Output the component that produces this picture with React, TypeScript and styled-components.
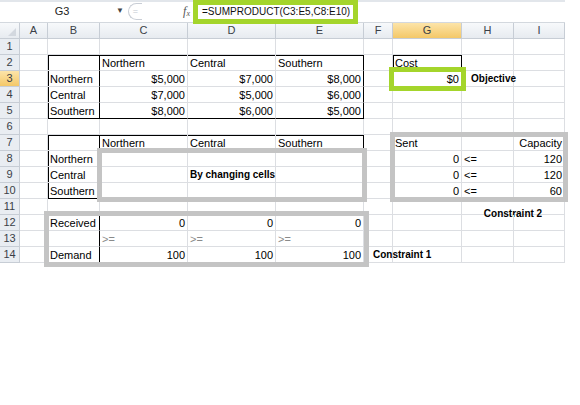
import React from 'react';
import styled, { createGlobalStyle, css } from 'styled-components';

const GlobalStyle = createGlobalStyle`
  html, body {
    margin: 0;
    padding: 0;
    background: #fff;
  }
  body {
    font-family: "Liberation Sans", Arial, sans-serif;
    color: #000;
  }
`;

const COLS = '20px 28px 52px 88px 88px 88px 29px 69px 52px 51px';
const GREEN = '#a4d52b';
const FRAME = '#c4c4c4';
const GRID_LINE = '#dcdee2';

type CellDef = {
  t?: string;
  a?: 'left' | 'right' | 'center';
  bold?: boolean;
  muted?: boolean;
  indent?: boolean;
  drop?: boolean;
  e?: string;
  span?: number;
};
type RowDef = Partial<Record<string, CellDef>>;

const LETTERS = ['A', 'B', 'C', 'D', 'E', 'F', 'G', 'H', 'I'];

const ROWS: RowDef[] = [
  {},
  {
    B: { e: 'tlr' },
    C: { t: 'Northern', e: 't' },
    D: { t: 'Central', e: 't' },
    E: { t: 'Southern', e: 'tr' },
    G: { t: 'Cost', e: 'tlr' },
  },
  {
    B: { t: 'Northern', e: 'lr' },
    C: { t: '$5,000', a: 'right' },
    D: { t: '$7,000', a: 'right' },
    E: { t: '$8,000', a: 'right', e: 'r' },
    G: { t: '$0', a: 'right', e: 'lr' },
    H: { t: 'Objective', bold: true, indent: true },
  },
  {
    B: { t: 'Central', e: 'lr' },
    C: { t: '$7,000', a: 'right' },
    D: { t: '$5,000', a: 'right' },
    E: { t: '$6,000', a: 'right', e: 'r' },
  },
  {
    B: { t: 'Southern', e: 'lrb' },
    C: { t: '$8,000', a: 'right', e: 'b' },
    D: { t: '$6,000', a: 'right', e: 'b' },
    E: { t: '$5,000', a: 'right', e: 'rb' },
  },
  {},
  {
    B: { e: 'tlr' },
    C: { t: 'Northern', e: 't' },
    D: { t: 'Central', e: 't' },
    E: { t: 'Southern', e: 'tr' },
    G: { t: 'Sent' },
    I: { t: 'Capacity', a: 'right' },
  },
  {
    B: { t: 'Northern', e: 'lr' },
    E: { e: 'r' },
    G: { t: '0', a: 'right' },
    H: { t: '<=' },
    I: { t: '120', a: 'right' },
  },
  {
    B: { t: 'Central', e: 'lr' },
    D: { t: 'By changing cells', bold: true },
    E: { e: 'r' },
    G: { t: '0', a: 'right' },
    H: { t: '<=' },
    I: { t: '120', a: 'right' },
  },
  {
    B: { t: 'Southern', e: 'lrb' },
    C: { e: 'b' },
    D: { e: 'b' },
    E: { e: 'rb' },
    G: { t: '0', a: 'right' },
    H: { t: '<=' },
    I: { t: '60', a: 'right' },
  },
  {
    H: { t: 'Constraint 2', bold: true, a: 'center', span: 2, drop: true },
  },
  {
    B: { t: 'Received', e: 'r' },
    C: { t: '0', a: 'right' },
    D: { t: '0', a: 'right' },
    E: { t: '0', a: 'right' },
  },
  {
    B: { e: 'r' },
    C: { t: '>=', muted: true },
    D: { t: '>=', muted: true },
    E: { t: '>=', muted: true },
  },
  {
    B: { t: 'Demand', e: 'r' },
    C: { t: '100', a: 'right' },
    D: { t: '100', a: 'right' },
    E: { t: '100', a: 'right' },
    F: { t: 'Constraint 1', bold: true, indent: true },
  },
];

const Window = styled.div`
  width: 580px;
  height: 405px;
  overflow: hidden;
  background: #fff;
`;

const FormulaBar = styled.div`
  display: flex;
  align-items: flex-start;
  width: 565px;
  height: 23px;
  box-sizing: border-box;
  border-bottom: 1px solid #d3d8de;
  box-shadow: inset 0 2px 0 #e2e6eb;
`;

const NameBox = styled.div`
  display: flex;
  align-items: center;
  justify-content: center;
  width: 112px;
  height: 22px;
  padding-left: 12px;
  box-sizing: border-box;
  font-size: 11px;
  color: #222;
`;

const DropArrow = styled.div`
  width: 16px;
  height: 22px;
  line-height: 22px;
  text-align: center;
  font-size: 8px;
  color: #444;
`;

const Pill = styled.div`
  width: 13px;
  height: 15px;
  margin-top: 3px;
  border: 1px solid #c9ced6;
  border-right: none;
  border-radius: 9px 0 0 9px;
  font-size: 9px;
  line-height: 14px;
  text-align: center;
  color: #c2c8d0;
`;

const FxSlot = styled.div`
  width: 51px;
  height: 22px;
  padding-right: 3px;
  box-sizing: border-box;
  text-align: right;
  font-family: "Liberation Serif", serif;
  font-style: italic;
  font-size: 12px;
  line-height: 22px;
  color: #555;

  sub {
    font-size: 8px;
    vertical-align: -1px;
  }
`;

const FormulaField = styled.div`
  position: relative;
  z-index: 2;
  width: 165px;
  height: 24px;
  box-sizing: border-box;
  border: 5px solid ${GREEN};
  background: #fff;
  padding-left: 4px;
  font-size: 10px;
  line-height: 14px;
  white-space: nowrap;
  color: #111;
`;

const FormulaRest = styled.div`
  flex: 1;
`;

const Sheet = styled.div`
  position: relative;
  width: 565px;
`;

const Grid = styled.div`
  display: grid;
  grid-template-columns: ${COLS};
  grid-auto-rows: 16px;
`;

const OverlayLayer = styled(Grid)`
  position: absolute;
  inset: 0;
  pointer-events: none;
`;

const Frame = styled.div<{ $c: string; $r: string; $m: string; $color: string }>`
  grid-column: ${p => p.$c};
  grid-row: ${p => p.$r};
  margin: ${p => p.$m};
  border: 5px solid ${p => p.$color};
`;

const headBase = css<{ $active?: boolean }>`
  box-sizing: border-box;
  font-size: 11px;
  line-height: 15px;
  text-align: center;
  color: #3a3f47;
  border-right: 1px solid #c7cdd5;
  border-bottom: 1px solid #c7cdd5;
  background: ${p =>
    p.$active ? 'linear-gradient(#fce4a9, #f4c868)' : 'linear-gradient(#f7f9fb, #e7ebf0)'};
`;

const Corner = styled.div`
  position: relative;
  box-sizing: border-box;
  border-right: 1px solid #c7cdd5;
  border-bottom: 1px solid #c7cdd5;
  background: linear-gradient(#f7f9fb, #e7ebf0);

  &::after {
    content: '';
    position: absolute;
    right: 3px;
    bottom: 2px;
    border-left: 8px solid transparent;
    border-bottom: 8px solid #d3d8df;
  }
`;

const ColHead = styled.div<{ $active?: boolean }>`
  ${headBase}
`;

const RowHead = styled.div<{ $active?: boolean }>`
  ${headBase}
  background: ${p => (p.$active ? 'linear-gradient(#fce4a9, #f4c868)' : '#e9edf2')};
`;

const edgeShadow = (e = '') => {
  const s: string[] = [];
  if (e.includes('t')) s.push('inset 0 1px 0 #000');
  if (e.includes('l')) s.push('inset 1px 0 0 #000');
  return s.length ? s.join(', ') : 'none';
};

const Cell = styled.div<{
  $align?: string;
  $bold?: boolean;
  $muted?: boolean;
  $indent?: boolean;
  $drop?: boolean;
  $edges?: string;
  $span?: number;
}>`
  box-sizing: border-box;
  grid-column: span ${p => p.$span || 1};
  padding: ${p => (p.$drop ? '7px' : '0')} 2px 0 ${p => (p.$indent ? '9px' : '2px')};
  font-size: ${p => (p.$bold ? '10px' : '11px')};
  line-height: 16px;
  white-space: nowrap;
  overflow: visible;
  text-align: ${p => p.$align || 'left'};
  font-weight: ${p => (p.$bold ? 700 : 400)};
  color: ${p => (p.$muted ? '#8a8a8a' : '#000')};
  border-right: 1px solid ${p => (p.$edges?.includes('r') ? '#000' : GRID_LINE)};
  border-bottom: 1px solid ${p => (p.$edges?.includes('b') ? '#000' : GRID_LINE)};
  box-shadow: ${p => edgeShadow(p.$edges)};
`;

function SheetRow({ index, row }: { index: number; row: RowDef }) {
  const cells: React.ReactNode[] = [];
  let skip = 0;
  LETTERS.forEach(letter => {
    if (skip > 0) {
      skip -= 1;
      return;
    }
    const c = row[letter] || {};
    if (c.span) skip = c.span - 1;
    cells.push(
      <Cell
        key={letter}
        $align={c.a}
        $bold={c.bold}
        $muted={c.muted}
        $indent={c.indent}
        $drop={c.drop}
        $edges={c.e}
        $span={c.span}
      >
        {c.t}
      </Cell>
    );
  });
  return (
    <>
      <RowHead $active={index === 3}>{index}</RowHead>
      {cells}
    </>
  );
}

export default function App() {
  return (
    <>
      <GlobalStyle />
      <Window>
        <FormulaBar>
          <NameBox>G3</NameBox>
          <DropArrow>▼</DropArrow>
          <Pill>=</Pill>
          <FxSlot>
            f<sub>x</sub>
          </FxSlot>
          <FormulaField>=SUMPRODUCT(C3:E5,C8:E10)</FormulaField>
          <FormulaRest />
        </FormulaBar>

        <Sheet>
          <Grid>
            <Corner />
            {LETTERS.map(l => (
              <ColHead key={l} $active={l === 'G'}>
                {l}
              </ColHead>
            ))}
            {ROWS.map((row, i) => (
              <SheetRow key={i} index={i + 1} row={row} />
            ))}
          </Grid>

          {/* highlight frames laid over the cells */}
          <OverlayLayer>
            <Frame $c="4 / 7" $r="9 / 12" $m="-3px" $color={FRAME} />
            <Frame $c="3 / 7" $r="13 / 16" $m="-4px -5px -4px -4px" $color={FRAME} />
            <Frame $c="8 / 11" $r="8 / 12" $m="-3px" $color={FRAME} />
            <Frame $c="8 / 9" $r="4 / 5" $m="-4px" $color={GREEN} />
          </OverlayLayer>
        </Sheet>
      </Window>
    </>
  );
}
